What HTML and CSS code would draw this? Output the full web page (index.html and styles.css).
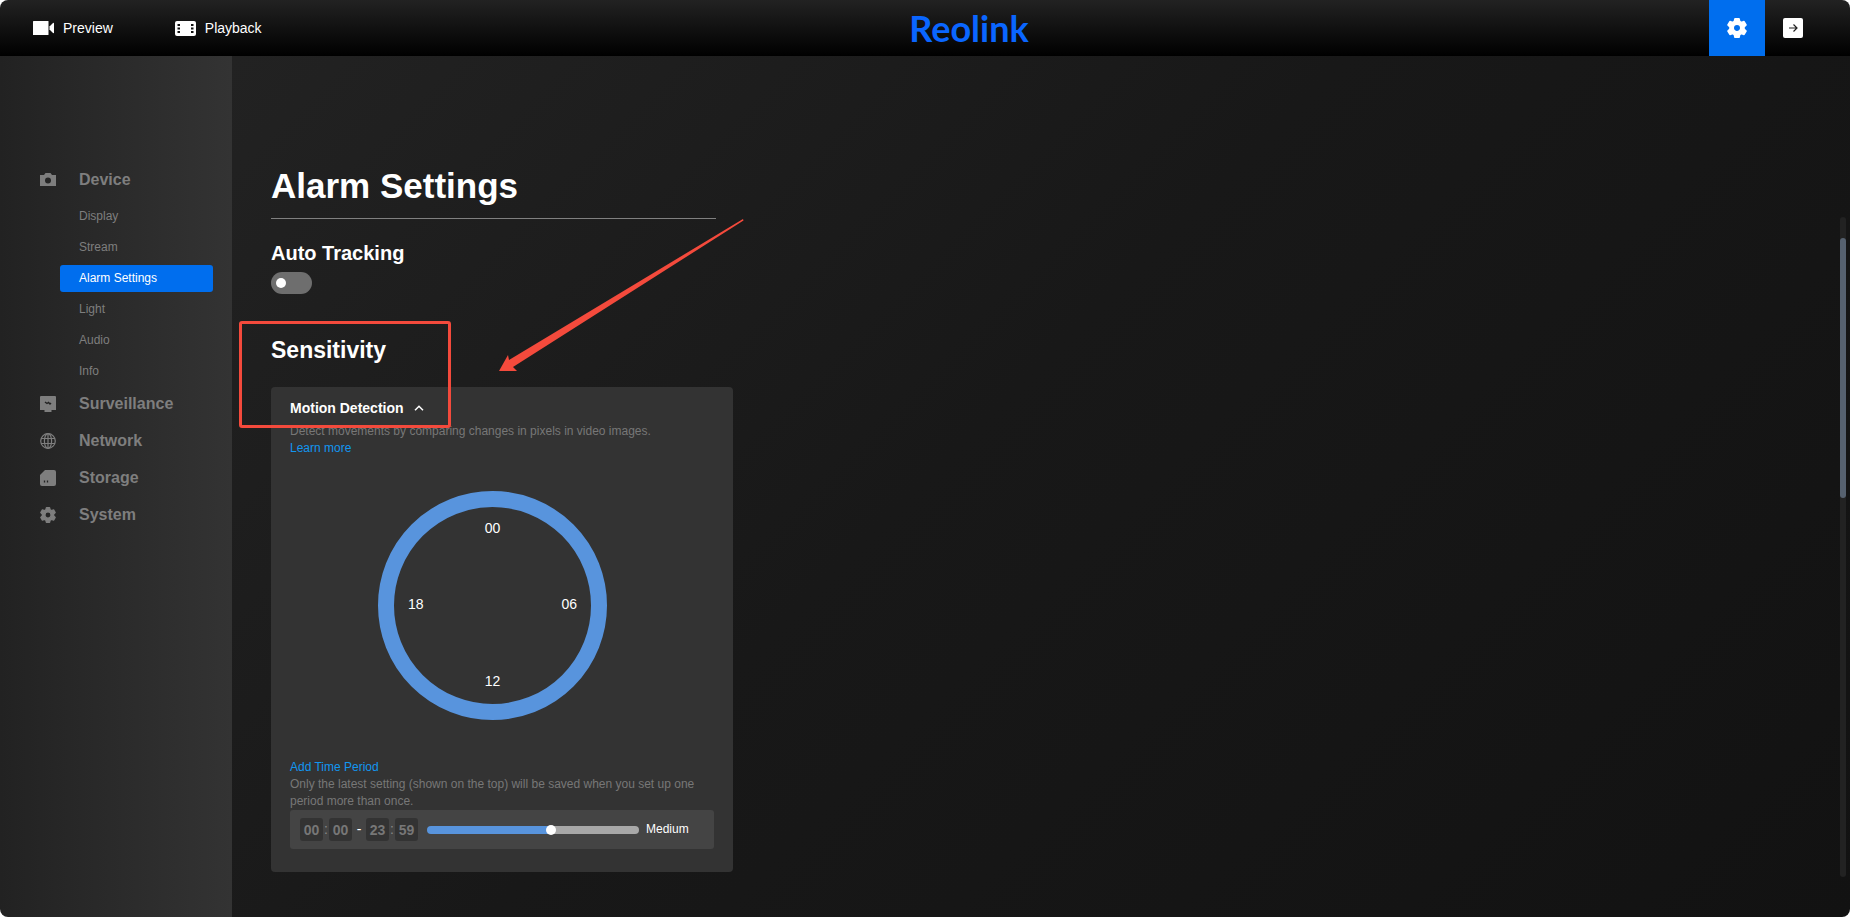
FILE: index.html
```html
<!DOCTYPE html>
<html lang="en">

<head>
  <meta charset="UTF-8">
  <meta name="viewport" content="width=device-width, initial-scale=1.0">
  <title>Reolink - Alarm Settings</title>
  <link rel="stylesheet" href="styles.css">
</head>

<body>
  <div class="app">
    <header class="header">
      <nav class="header-nav">
        <a href="#preview" class="nav-link">
          <svg width="21" height="15" viewBox="0 0 21 15" fill="#fff"><rect width="15.500" height="14" rx=".5"/><path d="M16.500 5.500L20 2q1-.5 1 .5v9q0 1-1 .5l-3.500-3.500z"/></svg>
          Preview
        </a>
        <a href="#playback" class="nav-link">
          <svg width="21" height="15" viewBox="0 0 21 15"><rect width="21" height="15" rx="2" fill="#fff"/><path d="M2.500 4h2.500M2.500 7.500h2.500M2.500 11h2.500M16 4h2.500M16 7.500h2.500M16 11h2.500" stroke="#111" stroke-width="1.800"/></svg>
          Playback
        </a>
      </nav>
      <a href="#home" class="logo">Reolink</a>
      <div class="header-tools">
        <button class="tool tool-active" type="button" aria-label="Settings">
          <svg width="20" height="20" viewBox="0 0 20 20"><use href="#gear"/></svg>
        </button>
        <button class="tool" type="button" aria-label="Log out">
          <svg width="20" height="20" viewBox="0 0 20 20"><rect width="20" height="20" rx="2" fill="#fff"/><path d="M6 10h8M10.500 6.500L14 10l-3.500 3.500" fill="none" stroke="#222" stroke-width="1.200"/></svg>
        </button>
      </div>
    </header>

    <div class="body">
      <aside class="sidebar">
        <a href="#device" class="group">
          <svg width="16" height="16" viewBox="0 0 16 16"><path fill="currentColor" fill-rule="evenodd" d="M0 3h4l1.500-2h5L12 3h4v11H0zM8 5.500a3 3 0 1 0 0 6 3 3 0 0 0 0-6z"/></svg>
          Device
        </a>
        <ul class="items">
          <li><a href="#display">Display</a></li>
          <li><a href="#stream">Stream</a></li>
          <li><a href="#alarm" class="active">Alarm Settings</a></li>
          <li><a href="#light">Light</a></li>
          <li><a href="#audio">Audio</a></li>
          <li><a href="#info">Info</a></li>
        </ul>
        <a href="#surveillance" class="group">
          <svg width="16" height="16" viewBox="0 0 16 16"><path fill="currentColor" d="M1 0h14q1 0 1 1v13H0V1q0-1 1-1zM4.500 14h7v2h-7z"/><path d="M5 6l2 1.500L8.500 6.500 10 8l1-1" fill="none" stroke="#222" stroke-width="1.400"/></svg>
          Surveillance
        </a>
        <a href="#network" class="group">
          <svg width="16" height="16" viewBox="0 0 16 16" fill="none" stroke="currentColor" stroke-width="1.200"><circle cx="8" cy="8" r="7.300"/><ellipse cx="8" cy="8" rx="3.600" ry="7.300"/><path d="M8 1v14M1 5.500h14M1 10.500h14"/></svg>
          Network
        </a>
        <a href="#storage" class="group">
          <svg width="16" height="16" viewBox="0 0 16 16"><path fill="currentColor" d="M5 0h9q2 0 2 2v12q0 2-2 2H2q-2 0-2-2V5z"/><path d="M4.500 10.500v2M7.500 10.500v2" stroke="#222" stroke-width="1.300"/></svg>
          Storage
        </a>
        <a href="#system" class="group">
          <svg width="16" height="16" viewBox="0 0 20 20"><use href="#gear"/></svg>
          System
        </a>
      </aside>

      <main class="main">
        <h1>Alarm Settings</h1>

        <h2><label for="tracking">Auto Tracking</label></h2>
        <input type="checkbox" id="tracking" class="switch">

        <h2 class="sensitivity">Sensitivity</h2>
        <section class="panel">
          <button type="button" class="panel-title">
            Motion Detection
            <svg width="10" height="6" viewBox="0 0 10 6"><path d="M1 5.300L5 1.300l4 4" fill="none" stroke="#fff" stroke-width="1.500"/></svg>
          </button>
          <p>Detect movements by comparing changes in pixels in video images.</p>
          <a href="#learn" class="link">Learn more</a>

          <div class="dial">
            <span class="h00">00</span>
            <span class="h18">18</span>
            <span class="h06">06</span>
            <span class="h12">12</span>
          </div>

          <a href="#add" class="link">Add Time Period</a>
          <p>Only the latest setting (shown on the top) will be saved when you set up one period more than once.</p>
          <div class="period">
            <input type="text" class="time" value="00" aria-label="Start hour" disabled>
            <span class="colon">:</span>
            <input type="text" class="time" value="00" aria-label="Start minute" disabled>
            <span class="dash">-</span>
            <input type="text" class="time" value="23" aria-label="End hour" disabled>
            <span class="colon">:</span>
            <input type="text" class="time" value="59" aria-label="End minute" disabled>
            <input type="range" id="level" class="slider" min="0" max="100" value="59">
            <label for="level">Medium</label>
          </div>
        </section>

        <div class="scrollbar"><div class="thumb"></div></div>

        <!-- callout over the sensitivity section -->
        <div class="callout"></div>
        <svg class="arrow" width="245" height="153" viewBox="0 0 245 153"><path d="M0 152L9 136l1 5L244 0l.500 1.500L14 148l4 4z" fill="#f44a3c"/></svg>
      </main>
    </div>
  </div>

  <svg class="sprite" viewBox="0 0 20 20">
    <defs>
      <path id="gear" fill="currentColor" fill-rule="evenodd" stroke="currentColor" stroke-width="1.600" stroke-linejoin="round" d="M8 .800h4l.700 2.700 1.600.900 2.700-.800 2 3.400-2 2v2l2 2-2 3.400-2.700-.800-1.600.900-.700 2.700H8l-.700-2.700-1.600-.900-2.700.800-2-3.400 2-2v-2l-2-2 2-3.400 2.700.800 1.600-.900zM10 6.200a3.800 3.800 0 1 0 0 7.600 3.800 3.800 0 0 0 0-7.600z"/>
    </defs>
  </svg>
</body>

</html>
```
FILE: styles.css
```css
*,
*::before,
*::after {
  margin: 0;
  padding: 0;
  box-sizing: border-box;
}
body {
  background: #fff;
  color: #fff;
  font: 12px/17px "Liberation Sans", Arial, sans-serif;
}
a {
  color: inherit;
  text-decoration: none;
}
button {
  border: 0;
  background: none;
  color: inherit;
  font: inherit;
  cursor: pointer;
}
svg {
  display: block;
  flex: none;
}
.sprite {
  position: absolute;
  width: 0;
  height: 0;
}
.app {
  display: flex;
  flex-direction: column;
  min-height: 100vh;
  border-radius: 8px;
  overflow: hidden;
}

/* header */
.header {
  display: grid;
  grid-template-columns: 1fr auto 1fr;
  align-items: center;
  height: 56px;
  padding: 0 29px 0 33px;
  background: linear-gradient(#222, #000);
}
.header-nav {
  display: flex;
  gap: 62px;
}
.nav-link {
  display: flex;
  align-items: center;
  gap: 9px;
  font-size: 14px;
}
.logo {
  margin-left: 84px;
  color: #0a66ff;
  font: bold 36px/56px Lato, sans-serif;
}
.header-tools {
  display: flex;
  justify-content: flex-end;
}
.tool {
  display: flex;
  align-items: center;
  justify-content: center;
  width: 56px;
  height: 56px;
}
.tool-active {
  background: #006eee;
}

/* sidebar */
.body {
  display: flex;
  flex: 1;
}
.sidebar {
  width: 232px;
  padding-top: 105px;
  background: linear-gradient(90deg, #222, #333);
  color: #7e7e7e;
}
.group {
  display: flex;
  align-items: center;
  gap: 23px;
  height: 37px;
  padding-left: 40px;
  font-size: 16px;
  font-weight: bold;
}
.items {
  margin-bottom: -2px;
  padding: 3px 19px 0 60px;
  list-style: none;
}
.items a {
  display: block;
  margin: 2px 0;
  padding-left: 19px;
  border-radius: 3px;
  line-height: 27px;
}
.items li {
  display: flow-root;
}
.items .active {
  background: #006eee;
  color: #fff;
}

/* content */
.main {
  position: relative;
  flex: 1;
  padding: 111px 39px 44px;
  background: linear-gradient(135deg, #222, #181818 45%, #121212);
}
h1 {
  width: 445px;
  padding-bottom: 13px;
  border-bottom: 1px solid #808080;
  font-size: 35px;
  line-height: 38px;
}
h2 {
  margin: 22px 0 7px;
  font-size: 20px;
  line-height: 24px;
}
.sensitivity {
  margin: 42px 0 23px;
  font-size: 23px;
  line-height: 28px;
}
.switch {
  display: flex;
  align-items: center;
  width: 41px;
  height: 22px;
  padding: 0 5px;
  border-radius: 11px;
  background: #6e6e6e;
  appearance: none;
  cursor: pointer;
}
.switch::before {
  content: "";
  width: 10px;
  height: 10px;
  border-radius: 50%;
  background: #fff;
}
.switch:checked {
  justify-content: flex-end;
  background: #006eee;
}
.panel {
  width: 462px;
  padding: 11px 19px 23px;
  border-radius: 4px;
  background: #333;
}
.panel p {
  color: #777;
}
.panel-title {
  display: flex;
  align-items: center;
  gap: 10px;
  margin-bottom: 5px;
  font-size: 14px;
  font-weight: bold;
  line-height: 20px;
}
.link {
  display: block;
  color: #1296f0;
}
.dial {
  display: grid;
  grid-template: "a b c" 1fr "d e f" 1fr "g h i" 1fr / 1fr 1fr 1fr;
  width: 229px;
  height: 229px;
  margin: 34px 0 39px 88px;
  padding: 13px 14px 15px;
  border: 16px solid #5894dd;
  border-radius: 50%;
  font-size: 14px;
  line-height: 16px;
}
.h00 {
  grid-area: b;
  justify-self: center;
}
.h18 {
  grid-area: d;
  align-self: center;
}
.h06 {
  grid-area: f;
  place-self: center end;
}
.h12 {
  grid-area: h;
  place-self: end center;
}
.period {
  display: flex;
  align-items: center;
  height: 39px;
  padding: 0 10px;
  border-radius: 3px;
  background: #444;
}
.time {
  width: 23px;
  height: 23px;
  border: 0;
  border-radius: 3px;
  background: #333;
  color: #777;
  font: bold 14px "Liberation Sans", Arial, sans-serif;
  text-align: center;
}
.colon {
  width: 6px;
  color: #888;
  font-size: 14px;
  text-align: center;
}
.dash {
  width: 14px;
  font-size: 14px;
  text-align: center;
}
.slider {
  width: 212px;
  height: 8px;
  margin: 0 7px 0 9px;
  border-radius: 4px;
  background: linear-gradient(90deg, #5894dd 59%, #a8a8a8 59%);
  appearance: none;
}
.slider::-webkit-slider-thumb {
  width: 10px;
  height: 10px;
  border-radius: 50%;
  background: #fff;
  appearance: none;
}
.scrollbar {
  position: absolute;
  top: 161px;
  right: 4px;
  bottom: 40px;
  width: 6px;
  padding-top: 21px;
  border-radius: 3px;
  background: #222;
}
.thumb {
  height: 260px;
  border-radius: 3px;
  background: #56616f;
}
.callout {
  position: absolute;
  top: 265px;
  left: 7px;
  width: 212px;
  height: 107px;
  border: 3px solid #f44a3c;
  border-radius: 3px;
}
.arrow {
  position: absolute;
  top: 163px;
  left: 267px;
}
```
